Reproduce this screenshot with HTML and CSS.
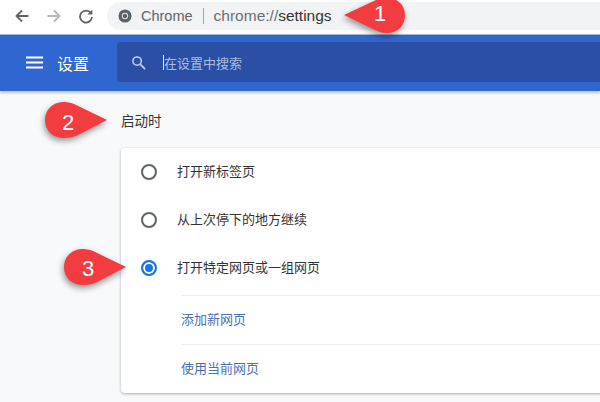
FILE: index.html
```html
<!DOCTYPE html>
<html lang="zh-CN">
<head>
    <meta charset="UTF-8">
    <title>设置</title>
    <link rel="stylesheet" href="styles.css">
</head>
<body>
    <div class="browser-bar">
        <svg class="nav-icon" viewBox="0 0 16 16"><path d="M14.5 8H2.5M8 2.5L2.5 8L8 13.5" fill="none" stroke="#5f6368" stroke-width="1.8"/></svg>
        <svg class="nav-icon" viewBox="0 0 16 16"><path d="M1.5 8H13.5M8 2.5L13.5 8L8 13.5" fill="none" stroke="#b4b6b9" stroke-width="1.8"/></svg>
        <svg class="nav-icon" viewBox="0 0 16 16"><path d="M13 5.2A6 6 0 1 0 14 9" fill="none" stroke="#5f6368" stroke-width="1.8"/><path d="M14.4 1.6V6.6H9.4Z" fill="#5f6368"/></svg>
        <div class="omnibox">
            <svg class="chrome-icon" viewBox="0 0 16 16"><circle cx="8" cy="8" r="7.5" fill="#5f6368"/><circle cx="8" cy="8" r="3.6" fill="#e8eaed"/><circle cx="8" cy="8" r="2.6" fill="#5f6368"/></svg>
            <span class="site-name">Chrome</span>
            <span class="omni-divider"></span>
            <span class="url"><span class="url-scheme">chrome://</span>settings</span>
        </div>
    </div>

    <div class="settings-header">
        <svg class="menu-icon" viewBox="0 0 17 13"><path d="M0 1.5H17M0 6.5H17M0 11.5H17" stroke="#fff" stroke-width="1.8"/></svg>
        <span class="header-title">设置</span>
        <div class="search-box">
            <svg class="search-icon" viewBox="0 0 16 16"><circle cx="6.5" cy="6.5" r="4.5" fill="none" stroke="#c3d3ee" stroke-width="1.6"/><path d="M10 10L15 15" stroke="#c3d3ee" stroke-width="1.8"/></svg>
            <span class="search-caret"></span>
            <span class="search-text">在设置中搜索</span>
        </div>
    </div>

    <div class="content">
        <div class="section-title">启动时</div>
        <div class="card">
            <div class="radio-row">
                <span class="radio"></span>
                <span class="radio-label">打开新标签页</span>
            </div>
            <div class="radio-row">
                <span class="radio"></span>
                <span class="radio-label">从上次停下的地方继续</span>
            </div>
            <div class="radio-row radio-row-last">
                <span class="radio radio-on"></span>
                <span class="radio-label">打开特定网页或一组网页</span>
            </div>
            <div class="link-row">添加新网页</div>
            <div class="link-row">使用当前网页</div>
        </div>
    </div>

    <!-- red numbered callouts pasted over the screenshot -->
    <svg class="callout callout-1" viewBox="0 0 64 40"><path d="M1 17L34 1.5C38 0 42 0 46 0C56 1 62 8 62 17C62 28 54 35 44 35C38 35 34 33 30 31Z"/></svg>
    <span class="callout-num num-1">1</span>
    <svg class="callout callout-2" viewBox="0 0 64 40"><path d="M63 18L30 2C26 0.5 22 0 18 0C8 1 1 8 1 18C1 29 9 36 20 36C26 36 30 35 34 33Z"/></svg>
    <span class="callout-num num-2">2</span>
    <svg class="callout callout-3" viewBox="0 0 64 40"><path d="M63 18L30 2C26 0.5 22 0 18 0C8 1 1 8 1 18C1 29 9 36 20 36C26 36 30 35 34 33Z"/></svg>
    <span class="callout-num num-3">3</span>
</body>
</html>
```

FILE: styles.css
```css
html, body {
    margin: 0;
    height: 402px;
    overflow: hidden;
}
body {
    position: relative;
    font-family: "Liberation Sans", "Noto Sans CJK SC", sans-serif;
    background: #f8f9fa;
}
.browser-bar {
    height: 34px;
    background: #fff;
    display: flex;
    align-items: center;
    padding-left: 14px;
    gap: 16px;
    box-sizing: border-box;
    padding-bottom: 3px;
}
.nav-icon {
    width: 16px;
    height: 16px;
    flex: none;
}
.omnibox {
    flex: 1;
    height: 28px;
    margin-left: -3px;
    background: #f1f3f4;
    border-radius: 14px 0 0 14px;
    display: flex;
    align-items: center;
    padding-left: 11px;
    font-size: 14.5px;
}
.chrome-icon {
    width: 14px;
    height: 14px;
    margin-right: 9px;
}
.site-name {
    color: #5f6368;
}
.omni-divider {
    width: 1px;
    height: 16px;
    background: #a0a4a8;
    margin: 0 10px;
}
.url {
    color: #333;
    font-size: 15.5px;
}
.url-scheme {
    color: #6b6f74;
}
.settings-header {
    height: 57px;
    background: #3066cf;
    border-top: 1px solid #a9b6cc;
    box-sizing: border-box;
    display: flex;
    align-items: center;
    padding-left: 26px;
    color: #fff;
    box-shadow: 0 2px 3px rgba(60, 64, 67, 0.3);
    position: relative;
}
.menu-icon {
    width: 17px;
    height: 13px;
    margin-right: 14px;
    margin-bottom: 2px;
    flex: none;
}
.header-title {
    font-size: 16px;
    white-space: nowrap;
    margin-right: 28px;
    flex: none;
}
.search-box {
    flex: 1;
    height: 40px;
    margin-bottom: 2px;
    background: #2a4fa5;
    border-radius: 3px 0 0 3px;
    display: flex;
    align-items: center;
    padding-left: 14px;
}
.search-icon {
    width: 15px;
    height: 15px;
    margin-right: 17px;
}
.search-caret {
    width: 1px;
    height: 15px;
    background: #dfe7f5;
}
.search-text {
    font-size: 13px;
    color: #a9bde3;
}
.content {
    padding: 22px 0 0 121px;
}
.section-title {
    font-size: 13.5px;
    line-height: 18px;
    color: #333;
    margin-bottom: 17px;
}
.card {
    background: #fff;
    border-radius: 4px 0 0 4px;
    box-shadow: 0 1px 3px rgba(60, 64, 67, 0.4);
    height: 245px;
    margin-right: -4px;
}
.radio-row {
    height: 48px;
    display: flex;
    align-items: center;
    padding-left: 20px;
    font-size: 13px;
    color: #333;
}
.radio-row-last {
    margin-bottom: 3px;
}
.radio-label {
    padding-bottom: 4px;
}
.radio {
    width: 12px;
    height: 12px;
    border: 2px solid #5f6368;
    border-radius: 50%;
    margin-right: 20px;
    flex: none;
}
.radio-on {
    border-color: #1a73e8;
    background: #1a73e8;
    box-shadow: inset 0 0 0 2px #fff;
}
.link-row {
    height: 49px;
    margin-left: 60px;
    padding-bottom: 4px;
    border-top: 1px solid #eceded;
    box-sizing: border-box;
    display: flex;
    align-items: center;
    font-size: 13px;
    color: #4a6fb5;
}
.callout {
    position: absolute;
    width: 64px;
    height: 40px;
    fill: #f23c3f;
    filter: drop-shadow(-1px 3px 3px rgba(0, 0, 0, 0.4));
}
.callout-1 {
    left: 343px;
    top: -2px;
}
.callout-2 {
    left: 44px;
    top: 102px;
}
.callout-3 {
    left: 63px;
    top: 249px;
}
.callout-num {
    position: absolute;
    color: #fff;
    font-size: 22px;
    line-height: 24px;
}
.num-1 {
    left: 374px;
    top: 2px;
}
.num-2 {
    left: 62px;
    top: 111px;
}
.num-3 {
    left: 82px;
    top: 257px;
}
```
